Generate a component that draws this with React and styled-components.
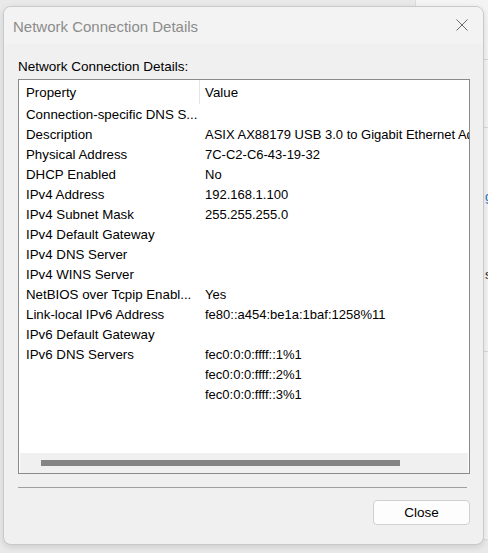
import styled, { createGlobalStyle } from "styled-components";

const GlobalStyle = createGlobalStyle`
  html, body {
    margin: 0;
    padding: 0;
    background: #e9e9e9;
  }
`;

const rows = [
  ["Connection-specific DNS S...", ""],
  ["Description", "ASIX AX88179 USB 3.0 to Gigabit Ethernet Adapter"],
  ["Physical Address", "7C-C2-C6-43-19-32"],
  ["DHCP Enabled", "No"],
  ["IPv4 Address", "192.168.1.100"],
  ["IPv4 Subnet Mask", "255.255.255.0"],
  ["IPv4 Default Gateway", ""],
  ["IPv4 DNS Server", ""],
  ["IPv4 WINS Server", ""],
  ["NetBIOS over Tcpip Enabl...", "Yes"],
  ["Link-local IPv6 Address", "fe80::a454:be1a:1baf:1258%11"],
  ["IPv6 Default Gateway", ""],
  ["IPv6 DNS Servers", "fec0:0:0:ffff::1%1"],
  ["", "fec0:0:0:ffff::2%1"],
  ["", "fec0:0:0:ffff::3%1"],
];

export default function App() {
  return (
    <Desktop>
      <GlobalStyle />
      <BackWindow>
        <BackLine $top={60} />
        <BackLine $top={128} />
        <BackText $top={190} $color="#1a6fc9">g</BackText>
        <BackText $top={268} $color="#222">s</BackText>
        <BackLine $top={352} />
      </BackWindow>
      <Dialog>
        <TitleBar>
          <Title>Network Connection Details</Title>
          <CloseIcon width="12" height="12" viewBox="0 0 12 12">
            <path d="M0.5 0.5 L11.5 11.5 M11.5 0.5 L0.5 11.5" stroke="#6b6b6b" strokeWidth="1" />
          </CloseIcon>
        </TitleBar>
        <Body>
          <Label>Network Connection Details:</Label>
          <ListBox>
            <Header>
              <HeaderCell>Property</HeaderCell>
              <HeaderCell $divider>Value</HeaderCell>
            </Header>
            <Rows>
              {rows.map(([prop, value], i) => (
                <Row key={i}>
                  <Cell>{prop}</Cell>
                  <Cell $value>{value}</Cell>
                </Row>
              ))}
            </Rows>
            <HScroll>
              <Thumb />
            </HScroll>
          </ListBox>
          <Separator />
          <Footer>
            <Button>Close</Button>
          </Footer>
        </Body>
      </Dialog>
    </Desktop>
  );
}

const Desktop = styled.div`
  position: relative;
  width: 488px;
  height: 553px;
  overflow: hidden;
  background: #e9e9e9;
  font-family: "Liberation Sans", Arial, sans-serif;
`;

const BackWindow = styled.div`
  position: absolute;
  left: 415px;
  top: -2px;
  width: 100px;
  height: 540px;
  background: #f4f4f4;
  border: 1px solid #dcdcdc;
  border-radius: 0 0 6px 6px;
`;

const BackLine = styled.div`
  position: absolute;
  left: 0;
  right: 0;
  top: ${(p) => p.$top}px;
  border-top: 1px solid #d8d8d8;
`;

const BackText = styled.span`
  position: absolute;
  left: 69px;
  top: ${(p) => p.$top}px;
  font-size: 13px;
  color: ${(p) => p.$color};
`;

const Dialog = styled.div`
  position: absolute;
  left: 3px;
  top: 6px;
  width: 479px;
  height: 537px;
  border: 1px solid #c9c9c9;
  border-radius: 8px;
  background: #f0f0f0;
  box-shadow: 0 2px 6px rgba(0, 0, 0, 0.12);
  display: flex;
  flex-direction: column;
  overflow: hidden;
`;

const TitleBar = styled.div`
  height: 37px;
  flex-shrink: 0;
  background: #f3f3f3;
  display: flex;
  align-items: center;
  justify-content: space-between;
  padding: 0 15px 0 9px;
`;

const Title = styled.span`
  font-size: 15px;
  color: #8c8c8c;
  margin-top: 1px;
`;

const CloseIcon = styled.svg`
  display: block;
  margin-top: -2px;
`;

const Body = styled.div`
  flex: 1;
  display: flex;
  flex-direction: column;
  padding: 15px 13px 0 14px;
`;

const Label = styled.div`
  font-size: 13.5px;
  color: #000;
  line-height: 16px;
  margin-bottom: 4px;
`;

const ListBox = styled.div`
  height: 393px;
  width: 450px;
  border: 1px solid #8a8a8a;
  background: #fff;
  display: flex;
  flex-direction: column;
  overflow: hidden;
  font-size: 13.3px;
  color: #000;
`;

const Header = styled.div`
  height: 24px;
  flex-shrink: 0;
  display: grid;
  grid-template-columns: 180px 1fr;
  align-items: center;
`;

const HeaderCell = styled.div`
  height: 100%;
  display: flex;
  align-items: center;
  padding-left: ${(p) => (p.$divider ? "5px" : "7px")};
  border-left: ${(p) => (p.$divider ? "1px solid #e5e5e5" : "none")};
  box-sizing: border-box;
`;

const Rows = styled.div`
  flex: 1;
  display: flex;
  flex-direction: column;
`;

const Row = styled.div`
  height: 20px;
  display: grid;
  grid-template-columns: 180px 1fr;
  align-items: center;
  white-space: nowrap;
`;

const Cell = styled.div`
  padding-left: ${(p) => (p.$value ? "6px" : "7px")};
  font-size: ${(p) => (p.$value ? "13px" : "13.3px")};
  overflow: hidden;
`;

const HScroll = styled.div`
  height: 20px;
  flex-shrink: 0;
  margin: 0 1px;
  background: #f0f0f0;
  display: flex;
  align-items: center;
  padding-left: 21px;
`;

const Thumb = styled.div`
  width: 359px;
  height: 6px;
  background: #858585;
`;

const Separator = styled.div`
  margin-top: 13px;
  width: 449px;
  border-top: 1px solid #a0a0a0;
`;

const Footer = styled.div`
  display: flex;
  justify-content: flex-end;
  padding-top: 12px;
  width: 452px;
`;

const Button = styled.button`
  width: 97px;
  height: 25px;
  background: #fdfdfd;
  border: 1px solid #d0d0d0;
  border-radius: 4px;
  font-family: "Liberation Sans", Arial, sans-serif;
  font-size: 13.5px;
  color: #000;
  padding: 0;
`;
